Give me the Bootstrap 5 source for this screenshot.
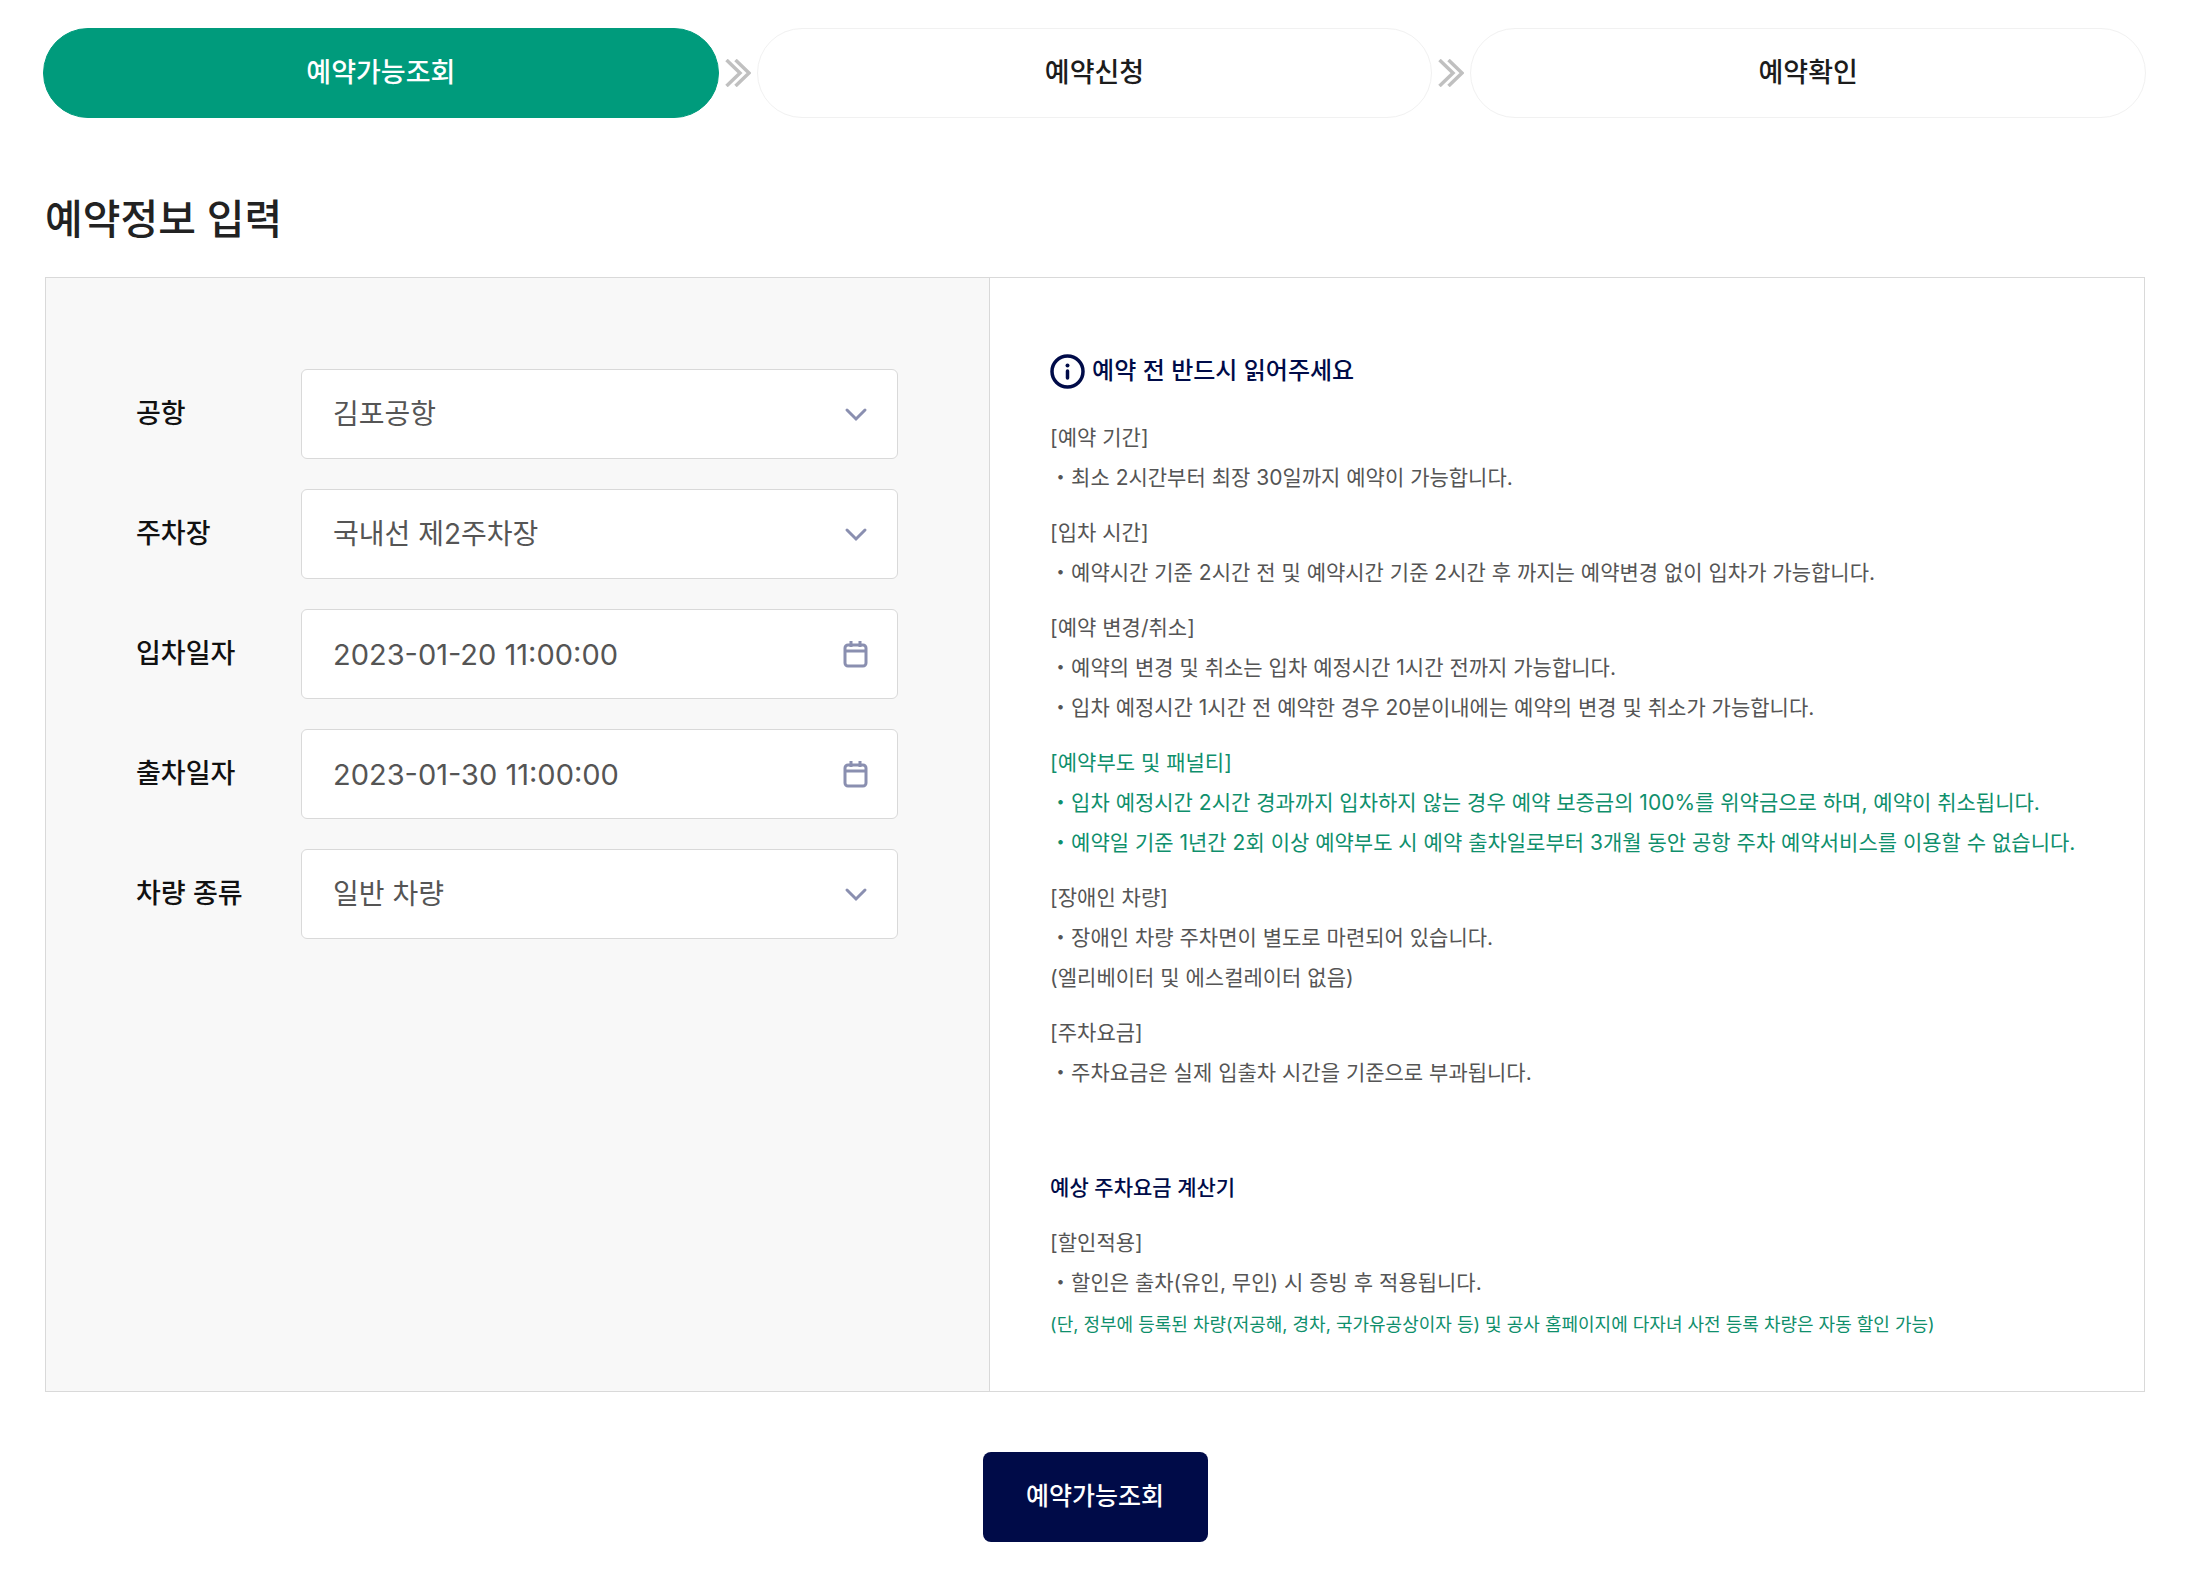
<!DOCTYPE html>
<html lang="ko">
<head>
<meta charset="utf-8">
<meta name="viewport" content="width=device-width, initial-scale=1">
<title>주차 예약</title>
<link href="https://cdn.jsdelivr.net/npm/bootstrap@5.3.0/dist/css/bootstrap.min.css" rel="stylesheet">
<style>
  body { font-family: Inter, "Noto Sans CJK KR", sans-serif; color: #1c1c1c; background: #fff; }
  .page { padding: 28px 46px 28px 43px; }
  .booking { padding: 0 1px 0 2px; }
  .step { flex: 1 1 0; height: 90px; border: 1px solid #f1f1f1; border-radius: 45px; font-size: 27px; font-weight: 500; }
  .step.current { background: #009b7c; border-color: #009b7c; color: #fff; }
  .step-arrow { flex: 0 0 38px; }
  .page-title { font-size: 41px; line-height: 60px; font-weight: 500; margin: 71px 0 28px; color: #222; }
  .panel { border: 1px solid #d9d9d9; }
  .form-side { flex: 0 0 45%; background: #f8f8f8; border-right: 1px solid #d9d9d9; padding: 91px 91px 91px 90px; }
  .fields { gap: 30px; }
  .fields label { flex: 0 0 165px; font-size: 27px; font-weight: 500; color: #111; }
  .fields .form-control, .fields .form-select { height: 90px; padding: 0 80px 0 31px; border: 1px solid #d9d9d9; border-radius: 6px; font-size: 28px; color: #555; background: #fff; }
  .fields .form-control { font-size: 29px; }
  .field-icon { right: 28px; top: 31px; pointer-events: none; }
  .info-side { padding: 75px 45px 44px 60px; color: #555; font-size: 21px; line-height: 40px; min-width: 0; }
  .info-title { font-size: 24px; line-height: 36px; font-weight: 500; color: #000b48; gap: 7px; margin-bottom: 29px; }
  .notice { margin-bottom: 15px; }
  .notice p, .notice h3, .notice li, .calc-title { font-size: 21px; line-height: 40px; margin: 0; font-weight: 400; }
  .info-side .calc-title { font-weight: 500; color: #000b48; margin: 75px 0 15px; }
  .notice li::before { content: "・"; }
  .green, .notice .green { color: #0f8f6c; }
  .notice .footnote { font-size: 18px; line-height: 44px; }
  .btn-search { width: 225px; height: 90px; background: #000b48; color: #fff; border-radius: 8px; font-size: 25px; font-weight: 500; margin-top: 60px; }
  .btn-search:hover { background: #0a1a68; color: #fff; }
</style>
</head>
<body>
<main class="page">
  <ol class="list-unstyled d-flex align-items-center mb-0">
    <li class="step current d-flex align-items-center justify-content-center" aria-current="step">예약가능조회</li>
    <li class="step-arrow text-center" aria-hidden="true"><svg width="26" height="28" viewBox="0 0 26 28" fill="none" stroke="#c0c0c0" stroke-width="3.500"><path d="M1.500 1 L15 14 L1.500 27 M10.500 1 L24 14 L10.500 27"/></svg></li>
    <li class="step d-flex align-items-center justify-content-center">예약신청</li>
    <li class="step-arrow text-center" aria-hidden="true"><svg width="26" height="28" viewBox="0 0 26 28" fill="none" stroke="#c0c0c0" stroke-width="3.500"><path d="M1.500 1 L15 14 L1.500 27 M10.500 1 L24 14 L10.500 27"/></svg></li>
    <li class="step d-flex align-items-center justify-content-center">예약확인</li>
  </ol>

  <form class="booking">
    <h1 class="page-title">예약정보 입력</h1>
    <div class="panel d-flex">
      <div class="form-side">
        <div class="fields d-flex flex-column">
          <div class="d-flex align-items-center">
            <label for="airport">공항</label>
            <div class="position-relative flex-grow-1">
              <select class="form-select" id="airport"><option>김포공항</option></select>
              <svg class="field-icon position-absolute" width="28" height="28" viewBox="0 0 28 28" fill="none" stroke="#8a8fb0" stroke-width="3" stroke-linecap="round"><path d="M5 10 L14 19 L23 10"/></svg>
            </div>
          </div>
          <div class="d-flex align-items-center">
            <label for="lot">주차장</label>
            <div class="position-relative flex-grow-1">
              <select class="form-select" id="lot"><option>국내선 제2주차장</option></select>
              <svg class="field-icon position-absolute" width="28" height="28" viewBox="0 0 28 28" fill="none" stroke="#8a8fb0" stroke-width="3" stroke-linecap="round"><path d="M5 10 L14 19 L23 10"/></svg>
            </div>
          </div>
          <div class="d-flex align-items-center">
            <label for="in-date">입차일자</label>
            <div class="position-relative flex-grow-1">
              <input class="form-control" type="text" id="in-date" value="2023-01-20 11:00:00">
              <svg class="field-icon position-absolute" width="28" height="28" viewBox="0 0 28 28" fill="none" stroke="#8a8fb0" stroke-width="3"><rect x="3" y="5" width="21" height="21" rx="3"/><path d="M3 11 H24 M9 1 V7 M18 1 V7"/></svg>
            </div>
          </div>
          <div class="d-flex align-items-center">
            <label for="out-date">출차일자</label>
            <div class="position-relative flex-grow-1">
              <input class="form-control" type="text" id="out-date" value="2023-01-30 11:00:00">
              <svg class="field-icon position-absolute" width="28" height="28" viewBox="0 0 28 28" fill="none" stroke="#8a8fb0" stroke-width="3"><rect x="3" y="5" width="21" height="21" rx="3"/><path d="M3 11 H24 M9 1 V7 M18 1 V7"/></svg>
            </div>
          </div>
          <div class="d-flex align-items-center">
            <label for="car">차량 종류</label>
            <div class="position-relative flex-grow-1">
              <select class="form-select" id="car"><option>일반 차량</option></select>
              <svg class="field-icon position-absolute" width="28" height="28" viewBox="0 0 28 28" fill="none" stroke="#8a8fb0" stroke-width="3" stroke-linecap="round"><path d="M5 10 L14 19 L23 10"/></svg>
            </div>
          </div>
        </div>
      </div>

      <div class="info-side flex-grow-1">
        <h2 class="info-title d-flex align-items-center">
          <svg width="35" height="35" viewBox="0 0 35 35" aria-hidden="true"><circle cx="17.500" cy="17.500" r="15.500" fill="none" stroke="#000b48" stroke-width="3.500"/><circle cx="17.500" cy="11.500" r="2" fill="#000b48"/><path d="M17.500 17 V24" stroke="#000b48" stroke-width="3.500" stroke-linecap="round"/></svg>
          예약 전 반드시 읽어주세요
        </h2>
        <section class="notice">
          <h3>[예약 기간]</h3>
          <ul class="list-unstyled mb-0"><li>최소 2시간부터 최장 30일까지 예약이 가능합니다.</li></ul>
        </section>
        <section class="notice">
          <h3>[입차 시간]</h3>
          <ul class="list-unstyled mb-0"><li>예약시간 기준 2시간 전 및 예약시간 기준 2시간 후 까지는 예약변경 없이 입차가 가능합니다.</li></ul>
        </section>
        <section class="notice">
          <h3>[예약 변경/취소]</h3>
          <ul class="list-unstyled mb-0">
            <li>예약의 변경 및 취소는 입차 예정시간 1시간 전까지 가능합니다.</li>
            <li>입차 예정시간 1시간 전 예약한 경우 20분이내에는 예약의 변경 및 취소가 가능합니다.</li>
          </ul>
        </section>
        <section class="notice green">
          <h3>[예약부도 및 패널티]</h3>
          <ul class="list-unstyled mb-0">
            <li>입차 예정시간 2시간 경과까지 입차하지 않는 경우 예약 보증금의 100%를 위약금으로 하며, 예약이 취소됩니다.</li>
            <li>예약일 기준 1년간 2회 이상 예약부도 시 예약 출차일로부터 3개월 동안 공항 주차 예약서비스를 이용할 수 없습니다.</li>
          </ul>
        </section>
        <section class="notice">
          <h3>[장애인 차량]</h3>
          <ul class="list-unstyled mb-0"><li>장애인 차량 주차면이 별도로 마련되어 있습니다.</li></ul>
          <p>(엘리베이터 및 에스컬레이터 없음)</p>
        </section>
        <section class="notice mb-0">
          <h3>[주차요금]</h3>
          <ul class="list-unstyled mb-0"><li>주차요금은 실제 입출차 시간을 기준으로 부과됩니다.</li></ul>
        </section>

        <h2 class="calc-title">예상 주차요금 계산기</h2>
        <section class="notice mb-0">
          <h3>[할인적용]</h3>
          <ul class="list-unstyled mb-0"><li>할인은 출차(유인, 무인) 시 증빙 후 적용됩니다.</li></ul>
          <p class="footnote green">(단, 정부에 등록된 차량(저공해, 경차, 국가유공상이자 등) 및 공사 홈페이지에 다자녀 사전 등록 차량은 자동 할인 가능)</p>
        </section>
      </div>
    </div>

    <div class="text-center">
      <button type="button" class="btn btn-search">예약가능조회</button>
    </div>
  </form>
</main>
<script src="https://cdn.jsdelivr.net/npm/bootstrap@5.3.0/dist/js/bootstrap.bundle.min.js"></script>
</body>
</html>
